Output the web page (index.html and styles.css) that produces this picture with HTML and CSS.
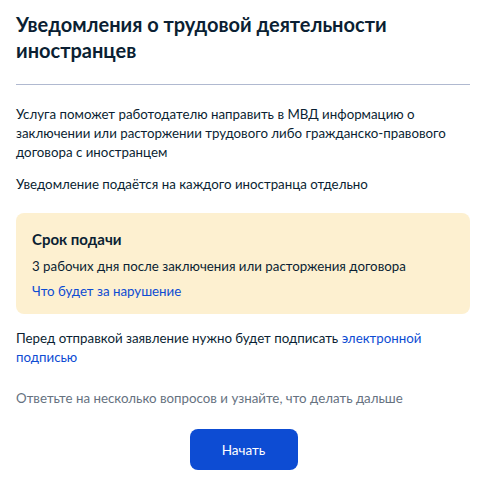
FILE: index.html
```html
<!DOCTYPE html>
<html lang="ru">
<head>
    <meta charset="UTF-8">
    <meta name="viewport" content="width=device-width, initial-scale=1.0">
    <title>Уведомления о трудовой деятельности иностранцев</title>
    <link rel="stylesheet" href="styles.css">
</head>
<body>
    <div class="service">
        <h1 class="service-title">Уведомления о трудовой деятельности иностранцев</h1>
        <hr class="divider">

        <p class="text">Услуга поможет работодателю направить в МВД информацию о заключении или расторжении трудового либо гражданско-правового договора с иностранцем</p>
        <p class="text">Уведомление подаётся на каждого иностранца отдельно</p>

        <div class="deadline">
            <h3>Срок подачи</h3>
            <p>3 рабочих дня после заключения или расторжения договора</p>
            <a href="#" class="link">Что будет за нарушение</a>
        </div>

        <p class="text">Перед отправкой заявление нужно будет подписать <a href="#" class="link">электронной подписью</a></p>

        <p class="hint">Ответьте на несколько вопросов и узнайте, что делать дальше</p>

        <div class="actions">
            <button class="btn-start">Начать</button>
        </div>
    </div>
</body>
</html>
```

FILE: styles.css
```css
:root {
    --text-main: #0b1f33;
    --text-muted: #66727f;
    --link: #0d4cd3;
    --divider: #b0b9d0;
    --note-bg: #fdf0d0;
    --btn-bg: #0d4cd3;
}

* {
    margin: 0;
    padding: 0;
    box-sizing: border-box;
    font-family: Lato, 'Open Sans', sans-serif;
}

body {
    background-color: #ffffff;
    color: var(--text-main);
}

.service {
    width: 454px;
    margin-left: 16px;
    padding-top: 11px;
}

.service-title {
    font-size: 20px;
    font-weight: 700;
    line-height: 26px;
    padding-right: 60px;
}

.divider {
    border: none;
    border-top: 1px solid var(--divider);
    margin: 21px 0 20px;
}

.text {
    font-size: 13.3px;
    line-height: 19px;
    margin-bottom: 13px;
}

.link {
    color: var(--link);
    text-decoration: none;
}

.deadline {
    background-color: var(--note-bg);
    border-radius: 8px;
    padding: 16px 16px 13px;
    margin: 19px 0 15px;
}

.deadline h3 {
    font-size: 15px;
    font-weight: 700;
    line-height: 20px;
    margin-bottom: 8px;
}

.deadline p {
    font-size: 13.3px;
    line-height: 19px;
    margin-bottom: 6px;
}

.deadline .link {
    display: block;
    font-size: 13.3px;
    line-height: 19px;
}

.hint {
    font-size: 13.3px;
    line-height: 19px;
    color: var(--text-muted);
    margin-top: 22px;
}

.actions {
    display: flex;
    justify-content: center;
    margin-top: 21px;
    padding-left: 1px;
}

.btn-start {
    width: 108px;
    height: 41px;
    background-color: var(--btn-bg);
    color: #ffffff;
    border: none;
    border-radius: 8px;
    font-size: 13.5px;
    cursor: pointer;
}
```
